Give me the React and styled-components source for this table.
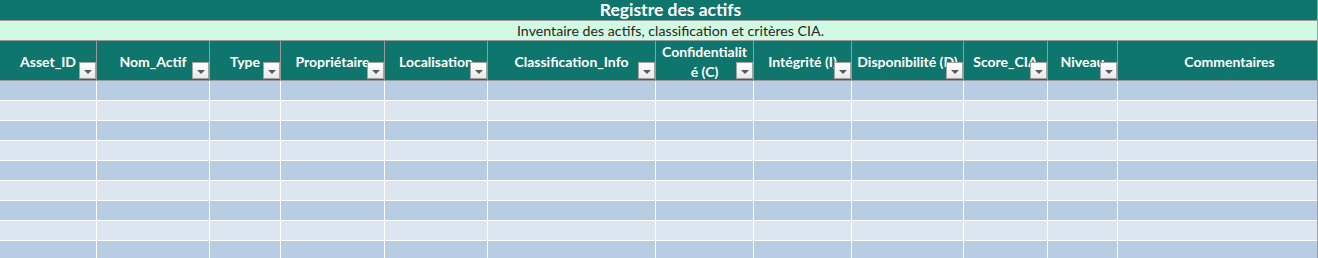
import React from 'react';
import styled, { createGlobalStyle } from 'styled-components';

const GlobalStyle = createGlobalStyle`
	html, body {
		margin: 0;
		padding: 0;
		background: #ffffff;
	}
	body {
		font-family: Lato, "Liberation Sans", Arial, sans-serif;
	}
`;

const COLUMNS = [
	{ label: 'Asset_ID', width: 97, filter: true },
	{ label: 'Nom_Actif', width: 113, filter: true },
	{ label: 'Type', width: 71, filter: true },
	{ label: 'Propriétaire', width: 104, filter: true },
	{ label: 'Localisation', width: 103, filter: true },
	{ label: 'Classification_Info', width: 168, filter: true },
	{ label: ['Confidentialit', 'é (C)'], width: 98, filter: true },
	{ label: 'Intégrité (I)', width: 98, filter: true },
	{ label: 'Disponibilité (D)', width: 112, filter: true },
	{ label: 'Score_CIA', width: 84, filter: true },
	{ label: 'Niveau', width: 70, filter: true },
	{ label: 'Commentaires', width: 223, filter: false },
];

const ROW_COUNT = 10;
const gridColumns = COLUMNS.map(c => `${c.width}px`).join(' ');
const tableWidth = COLUMNS.reduce((sum, c) => sum + c.width, 0);

const Viewport = styled.div`
	width: 1317px;
	height: 258px;
	overflow: hidden;
	border-right: 1px solid #a0a0a0;
`;

const Sheet = styled.div`
	width: ${tableWidth}px;
	display: flex;
	flex-direction: column;
`;

const TitleBar = styled.div`
	height: 20px;
	background: #0f766e;
	border-bottom: 1px solid #9a9a9a;
	color: #ffffff;
	font-weight: 700;
	font-size: 17.5px;
	line-height: 20px;
	text-align: center;
`;

const SubTitle = styled.div`
	height: 19px;
	background: #d1fae5;
	border-bottom: 1px solid #9a9a9a;
	color: #2a2418;
	font-size: 14.2px;
	line-height: 20px;
	text-align: center;
`;

const Row = styled.div`
	display: grid;
	grid-template-columns: ${gridColumns};
`;

const HeaderCell = styled.div`
	position: relative;
	height: 37px;
	padding-top: 2px;
	background: #0f766e;
	border-right: 1px solid #9a9a9a;
	border-bottom: 1px solid #9a9a9a;
	color: #ffffff;
	font-weight: 700;
	font-size: 14px;
	line-height: 20px;
	display: flex;
	flex-direction: column;
	align-items: center;
	justify-content: center;
	text-align: center;
	white-space: nowrap;
	&:last-child {
		border-right: none;
	}
`;

const FilterButton = styled.span`
	position: absolute;
	right: 0;
	bottom: 1px;
	width: 17px;
	height: 17px;
	box-sizing: border-box;
	border: 1px solid #a3a3a3;
	background: linear-gradient(#ffffff, #e9e9e9);
	display: flex;
	align-items: center;
	justify-content: center;
	&::after {
		content: '';
		width: 0;
		height: 0;
		margin-top: 2px;
		border-left: 4px solid transparent;
		border-right: 4px solid transparent;
		border-top: 4px solid #595959;
	}
`;

const Cell = styled.div`
	height: 19px;
	background: ${({ shade }) => (shade ? '#b8cce4' : '#dce6f1')};
	border-right: 1px solid #ffffff;
	border-bottom: 1px solid #ffffff;
	&:last-child {
		border-right: none;
	}
`;

export default function App() {
	const renderHeader = (column, idx) => {
		const lines = Array.isArray(column.label) ? column.label : [column.label];
		return (
			<HeaderCell key={idx}>
				{lines.map(line => (
					<span key={line}>{line}</span>
				))}
				{column.filter && <FilterButton />}
			</HeaderCell>
		);
	};

	const renderRow = (_, rowIdx) => (
		<Row key={rowIdx}>
			{COLUMNS.map((c, idx) => (
				<Cell key={idx} shade={rowIdx % 2 === 0} />
			))}
		</Row>
	);

	return (
		<>
			<GlobalStyle />
			<Viewport>
				<Sheet>
					<TitleBar>Registre des actifs</TitleBar>
					<SubTitle>Inventaire des actifs, classification et critères CIA.</SubTitle>
					<Row>{COLUMNS.map(renderHeader)}</Row>
					{Array.from({ length: ROW_COUNT }).map(renderRow)}
				</Sheet>
			</Viewport>
		</>
	);
}
